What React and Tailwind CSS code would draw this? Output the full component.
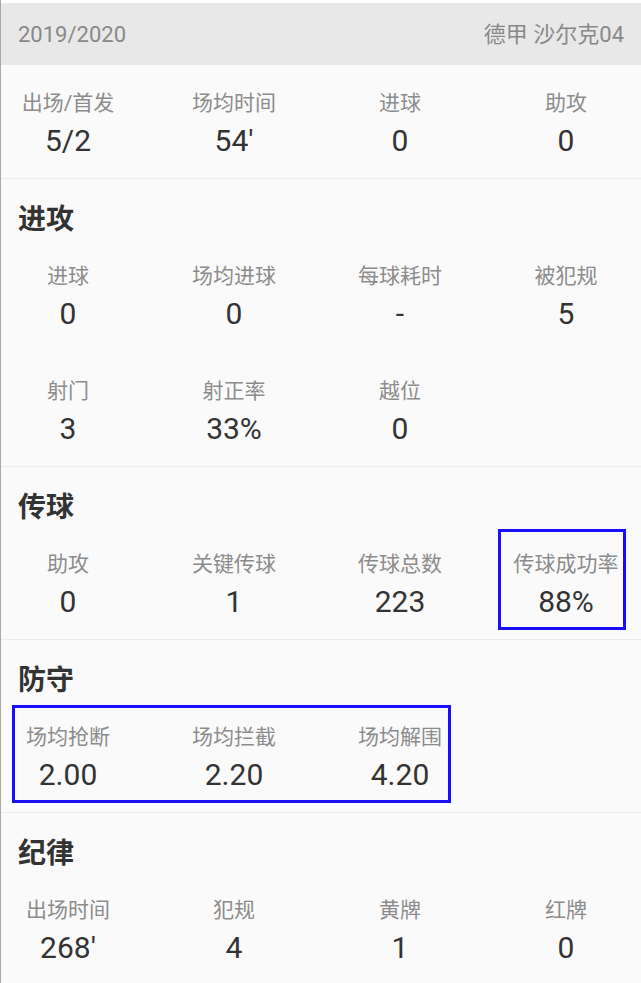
const FONT = "font-['Roboto','Noto_Sans_CJK_SC',sans-serif]";

const sections = [
  {
    title: '进攻',
    rows: [
      [
        ['进球', '0'],
        ['场均进球', '0'],
        ['每球耗时', '-'],
        ['被犯规', '5'],
      ],
      [
        ['射门', '3'],
        ['射正率', '33%'],
        ['越位', '0'],
      ],
    ],
  },
  {
    title: '传球',
    rows: [
      [
        ['助攻', '0'],
        ['关键传球', '1'],
        ['传球总数', '223'],
        ['传球成功率', '88%'],
      ],
    ],
    box: 'left-[497px] top-[-21px] w-[128px] h-[101px]',
  },
  {
    title: '防守',
    rows: [
      [
        ['场均抢断', '2.00'],
        ['场均拦截', '2.20'],
        ['场均解围', '4.20'],
      ],
    ],
    box: 'left-[11px] top-[-18px] w-[439px] h-[98px]',
  },
  {
    title: '纪律',
    rows: [
      [
        ['出场时间', "268'"],
        ['犯规', '4'],
        ['黄牌', '1'],
        ['红牌', '0'],
      ],
    ],
  },
];

function StatRow({ items }) {
  return (
    <div className="ml-[-16px] grid grid-cols-[repeat(4,166px)]">
      {items.map(([label, value]) => (
        <div key={label} className="flex flex-col items-center">
          <div className="h-[28px] text-[21px] leading-[28px] text-[#8c8c8c] whitespace-nowrap">{label}</div>
          <div className="mt-[6px] h-[36px] text-[30px] leading-[36px] text-[#333]">{value}</div>
        </div>
      ))}
    </div>
  );
}

function Section({ title, rows, box }) {
  return (
    <div className="border-t border-[#ececec] pt-6 pb-[19px]">
      <div className="px-[17px] h-[34px] text-[28px] leading-[34px] font-bold text-[#333]">{title}</div>
      <div className="relative mt-[25px] flex flex-col gap-[45px]">
        {rows.map((items, i) => (
          <StatRow key={i} items={items} />
        ))}
        {box && <div className={`absolute border-[3px] border-[#1a0dff] ${box}`} />}
      </div>
    </div>
  );
}

export default function App() {
  return (
    <div className={`${FONT} w-[641px] h-[983px] overflow-hidden bg-[#fafafa] border-l border-[#a8a8a8]`}>
      <div className="h-[3px] bg-white" />
      <div className="h-[62px] bg-[#e8e8e8] px-[17px] flex items-center justify-between text-[22px] text-[#888]">
        <span>2019/2020</span>
        <span>德甲 沙尔克04</span>
      </div>
      <div className="pt-6 pb-[19px]">
        <StatRow
          items={[
            ['出场/首发', '5/2'],
            ['场均时间', "54'"],
            ['进球', '0'],
            ['助攻', '0'],
          ]}
        />
      </div>
      {sections.map((s) => (
        <Section key={s.title} {...s} />
      ))}
    </div>
  );
}
